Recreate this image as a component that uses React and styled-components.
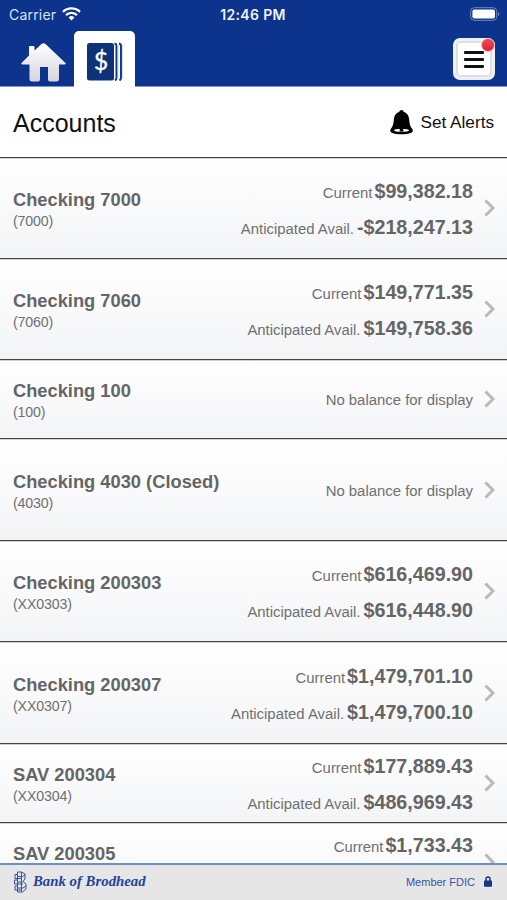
import React from 'react';
import styled, { createGlobalStyle } from 'styled-components';

const GlobalStyle = createGlobalStyle`
  * {
    box-sizing: border-box;
  }

  body {
    margin: 0;
    overflow: hidden;
    background: #fff;
    font-family: "Liberation Sans", Arial, sans-serif;
  }
`;

const Screen = styled.div`
  display: flex;
  flex-direction: column;
  width: 100%;
  height: 900px;
`;

const Header = styled.header`
  flex: none;
  height: 87px;
  background: #0c348c;
  border-bottom: 1px solid #7f9bcb;
`;

const StatusBar = styled.div`
  display: grid;
  grid-template-columns: 1fr auto 1fr;
  align-items: center;
  height: 28px;
  padding: 0 7px 0 9px;
  color: #fff;
  font-family: Inter, sans-serif;
  font-size: 14px;
`;

const Carrier = styled.div`
  display: flex;
  align-items: center;
  gap: 6px;
  color: #d9e2f5;
  letter-spacing: 0.2px;
`;

const Time = styled.div`
  margin-right: 3px;
  font-weight: 600;
  color: #eef3fc;
  letter-spacing: 0.35px;
`;

const BatteryWrap = styled.div`
  display: flex;
  justify-content: flex-end;
`;

const NavBar = styled.nav`
  display: flex;
  align-items: flex-start;
  height: 59px;
  padding: 3px 12px 0 21px;
`;

const HomeButton = styled.div`
  width: 53px;
  padding-top: 11px;
`;

const ActiveTab = styled.div`
  display: flex;
  justify-content: center;
  width: 61px;
  height: 56px;
  padding-top: 11px;
  border-radius: 5px 5px 0 0;
  background: #fff;
`;

const MenuButton = styled.div`
  position: relative;
  display: flex;
  flex-direction: column;
  align-items: center;
  justify-content: center;
  gap: 4px;
  width: 42px;
  height: 42px;
  margin: 7px 0 0 auto;
  border: 3px solid #eff0f3;
  border-radius: 7px;
  background: #fff;
  box-shadow: inset 0 0 0 2px #e0e0e2;
`;

const MenuLine = styled.span`
  width: 20px;
  height: 3px;
  border-radius: 1px;
  background: #111;
`;

const Badge = styled.span`
  position: absolute;
  top: -3px;
  right: -3px;
  width: 14px;
  height: 14px;
  border: 1px solid #f3b9c2;
  border-radius: 50%;
  background: linear-gradient(#ee4a58, #dc1f36);
`;

const TitleBar = styled.div`
  display: flex;
  flex: none;
  align-items: center;
  justify-content: space-between;
  height: 71px;
  padding: 0 13px;
  border-bottom: 1px solid #444;
`;

const Title = styled.h1`
  margin: 2px 0 0;
  color: #111;
  font-size: 25px;
  font-weight: 400;
`;

const SetAlerts = styled.div`
  display: flex;
  align-items: center;
  gap: 7px;
  color: #111;
  font-size: 17.2px;
`;

const AccountList = styled.div`
  flex: 1;
  min-height: 0;
  overflow: hidden;
`;

const AccountRow = styled.div`
  display: flex;
  align-items: center;
  height: ${props => props.$height}px;
  padding: 0 12px 0 13px;
  border-bottom: 1px solid #444;
  background: linear-gradient(#fff, #f3f4f6);
  box-shadow: inset 0 1px 0 #d2d2d2;
`;

const AccountInfo = styled.div`
  flex: 1;
  padding-top: 4px;
`;

const AccountName = styled.div`
  color: #656565;
  font-size: 18.3px;
  font-weight: 700;
  line-height: 22px;
`;

const AccountNumber = styled.div`
  height: 20px;
  color: #707070;
  font-size: 14.2px;
  letter-spacing: -0.15px;
  line-height: 20px;
`;

const Balances = styled.div`
  margin-right: 11px;
  padding-top: 2px;
  color: #707070;
  font-size: 14.9px;
  text-align: right;
`;

const BalanceLine = styled.div`
  display: flex;
  align-items: baseline;
  justify-content: flex-end;
  gap: ${props => props.$gap || 2}px;
  height: 36px;
  line-height: 36px;
`;

const Amount = styled.span`
  color: #656565;
  font-size: 19.7px;
  font-weight: 700;
`;

const Footer = styled.footer`
  display: flex;
  flex: none;
  align-items: center;
  justify-content: space-between;
  height: 37px;
  padding: 0 15px 2px 13px;
  border-top: 2px solid #6e8fc4;
  background: #e6e6e7;
`;

const Brand = styled.div`
  display: flex;
  align-items: center;
  gap: 6px;
  color: #24419a;
  font-family: "Liberation Serif", "Times New Roman", serif;
  font-size: 14.8px;
  font-style: italic;
  font-weight: 700;
`;

const Member = styled.div`
  display: flex;
  align-items: center;
  gap: 9px;
  color: #3554a5;
  font-size: 11px;
`;

const WifiIcon = () => (
  <svg width="19" height="14" viewBox="0 0 19 14" fill="none" stroke="#fff" strokeWidth="2.3">
    <path d="M1 4.9a12.2 12.2 0 0 1 17 0" />
    <path d="M4 8.1a7.8 7.8 0 0 1 11 0" />
    <path d="M9.5 13.4 6.6 10.5a4.1 4.1 0 0 1 5.8 0z" fill="#fff" stroke="none" />
  </svg>
);

const BatteryIcon = () => (
  <svg width="30" height="14" viewBox="0 0 30 14">
    <rect x=".7" y=".7" width="26" height="12.6" rx="3.6" fill="none" stroke="#7289bd" strokeWidth="1" />
    <rect x="2.4" y="2.4" width="22.6" height="9.2" rx="2" fill="#fff" />
    <path d="M28 4.7c1.7.8 1.7 3.8 0 4.6z" fill="#7289bd" />
  </svg>
);

const HomeIcon = () => (
  <svg width="45" height="40" viewBox="0 0 45 40">
    <defs>
      <linearGradient id="house" x1="0" y1="0" x2="0" y2="1">
        <stop offset="0" stopColor="#fff" />
        <stop offset="1" stopColor="#d5d5da" />
      </linearGradient>
    </defs>
    <path
      d="M20.5 2q2-1.600 4 0L44.500 21q.8 1.500-1 1.500H38V37q0 2.500-2.500 2.500H29q-2 0-2-2V25h-8v12.500q0 2-2 2h-6q-2.500 0-2.500-2.500V22.500H1.500q-1.800 0-1-1.500L8 13.500V5q0-1 1-1h3.500q1 0 1 1v3.500z"
      fill="url(#house)"
    />
  </svg>
);

const AccountsIcon = () => (
  <svg width="36" height="39" viewBox="0 0 36 39">
    <rect x="0" y="1" width="27" height="37.5" rx="2.500" fill="#0d3278" />
    <path d="M27.500 1.500q2 .5 2 2v32q0 2-1.500 3M32 1.500q2 .5 2 2v32q0 2-1.500 3" fill="none" stroke="#14387f" strokeWidth="2" />
    <path d="M31 3v34M35.400 3v34" fill="none" stroke="#b9c9e3" strokeWidth=".7" />
    <text
      x="14"
      y="28"
      fill="#fff"
      stroke="#fff"
      strokeWidth=".3"
      fontFamily="Lato, sans-serif"
      fontSize="25"
      textAnchor="middle"
    >
      $
    </text>
  </svg>
);

const BellIcon = () => (
  <svg width="23" height="25" viewBox="0 0 23 25">
    <path
      d="M11.500 0c1.200 0 1.900.8 2.200 1.700 3.500 1.200 5.300 4.300 5.500 8 .3 4 .9 6.800 3 9.300 1.200 1.800.7 3-1 3.700-5 2.200-14.400 2.200-19.400 0-1.700-.7-2.200-1.900-1-3.700 2.100-2.500 2.700-5.300 3-9.300.2-3.700 2-6.800 5.500-8C9.600.8 10.300 0 11.500 0z"
      fill="#000"
    />
    <path d="M4 20.300q0-1.600 7.500-1.600t7.500 1.600q-.5 1.500-7.500 1.500T4 20.300z" fill="#fff" />
    <path d="M10 18h3l.5 3.500h-4z" fill="#000" />
  </svg>
);

const Chevron = () => (
  <svg width="11" height="18" viewBox="0 0 11 18">
    <path d="M1.500 1.500 9 9l-7.500 7.500" fill="none" stroke="#b9b9b9" strokeWidth="3" />
  </svg>
);

const BrandMark = () => (
  <svg width="14" height="22" viewBox="0 0 14 22" fill="none" stroke="#3854a3" strokeWidth="1">
    <path d="M4.500 1h4L12 3v5l-2 2.500 3 2.500v5l-3.500 3h-5V1z" />
    <path d="M4.500 3.500H2v4h7M4.500 9H1.500v4H10M4.500 15H2v4h7M4.500 5.500h5L12 4M4.500 11h5M4.500 17H10l3-2M8.500 1v20" />
  </svg>
);

const LockIcon = () => (
  <svg width="8" height="11" viewBox="0 0 8 11">
    <path d="M2 5V3a2 2 0 0 1 4 0v2" fill="none" stroke="#123586" strokeWidth="1.500" />
    <rect x="0" y="4.600" width="8" height="6.200" rx=".8" fill="#123586" />
  </svg>
);

const accounts = [
  { name: 'Checking 7000', number: '(7000)', current: '$99,382.18', available: '-$218,247.13', height: 101 },
  { name: 'Checking 7060', number: '(7060)', current: '$149,771.35', available: '$149,758.36', height: 101 },
  { name: 'Checking 100', number: '(100)', height: 79 },
  { name: 'Checking 4030 (Closed)', number: '(4030)', height: 102 },
  { name: 'Checking 200303', number: '(XX0303)', current: '$616,469.90', available: '$616,448.90', height: 101 },
  { name: 'Checking 200307', number: '(XX0307)', current: '$1,479,701.10', available: '$1,479,700.10', height: 102 },
  { name: 'SAV 200304', number: '(XX0304)', current: '$177,889.43', available: '$486,969.43', height: 79 },
  { name: 'SAV 200305', current: '$1,733.43', height: 79 }
];

function Account({ account }) {
  return (
    <AccountRow $height={account.height}>
      <AccountInfo>
        <AccountName>{account.name}</AccountName>
        <AccountNumber>{account.number}</AccountNumber>
      </AccountInfo>
      <Balances>
        {account.current ? (
          <>
            <BalanceLine>
              Current <Amount>{account.current}</Amount>
            </BalanceLine>
            <BalanceLine $gap={3}>
              {account.available && (
                <>Anticipated Avail. <Amount>{account.available}</Amount></>
              )}
            </BalanceLine>
          </>
        ) : 'No balance for display'}
      </Balances>
      <Chevron />
    </AccountRow>
  );
}

export default function App() {
  return (
    <Screen>
      <GlobalStyle />
      <Header>
        <StatusBar>
          <Carrier>Carrier <WifiIcon /></Carrier>
          <Time>12:46 PM</Time>
          <BatteryWrap><BatteryIcon /></BatteryWrap>
        </StatusBar>
        <NavBar>
          <HomeButton><HomeIcon /></HomeButton>
          <ActiveTab><AccountsIcon /></ActiveTab>
          <MenuButton>
            <MenuLine />
            <MenuLine />
            <MenuLine />
            <Badge />
          </MenuButton>
        </NavBar>
      </Header>
      <TitleBar>
        <Title>Accounts</Title>
        <SetAlerts><BellIcon /> Set Alerts</SetAlerts>
      </TitleBar>
      <AccountList>
        {accounts.map(account => <Account key={account.name} account={account} />)}
      </AccountList>
      <Footer>
        <Brand><BrandMark /> Bank of Brodhead</Brand>
        <Member>Member FDIC <LockIcon /></Member>
      </Footer>
    </Screen>
  );
}
